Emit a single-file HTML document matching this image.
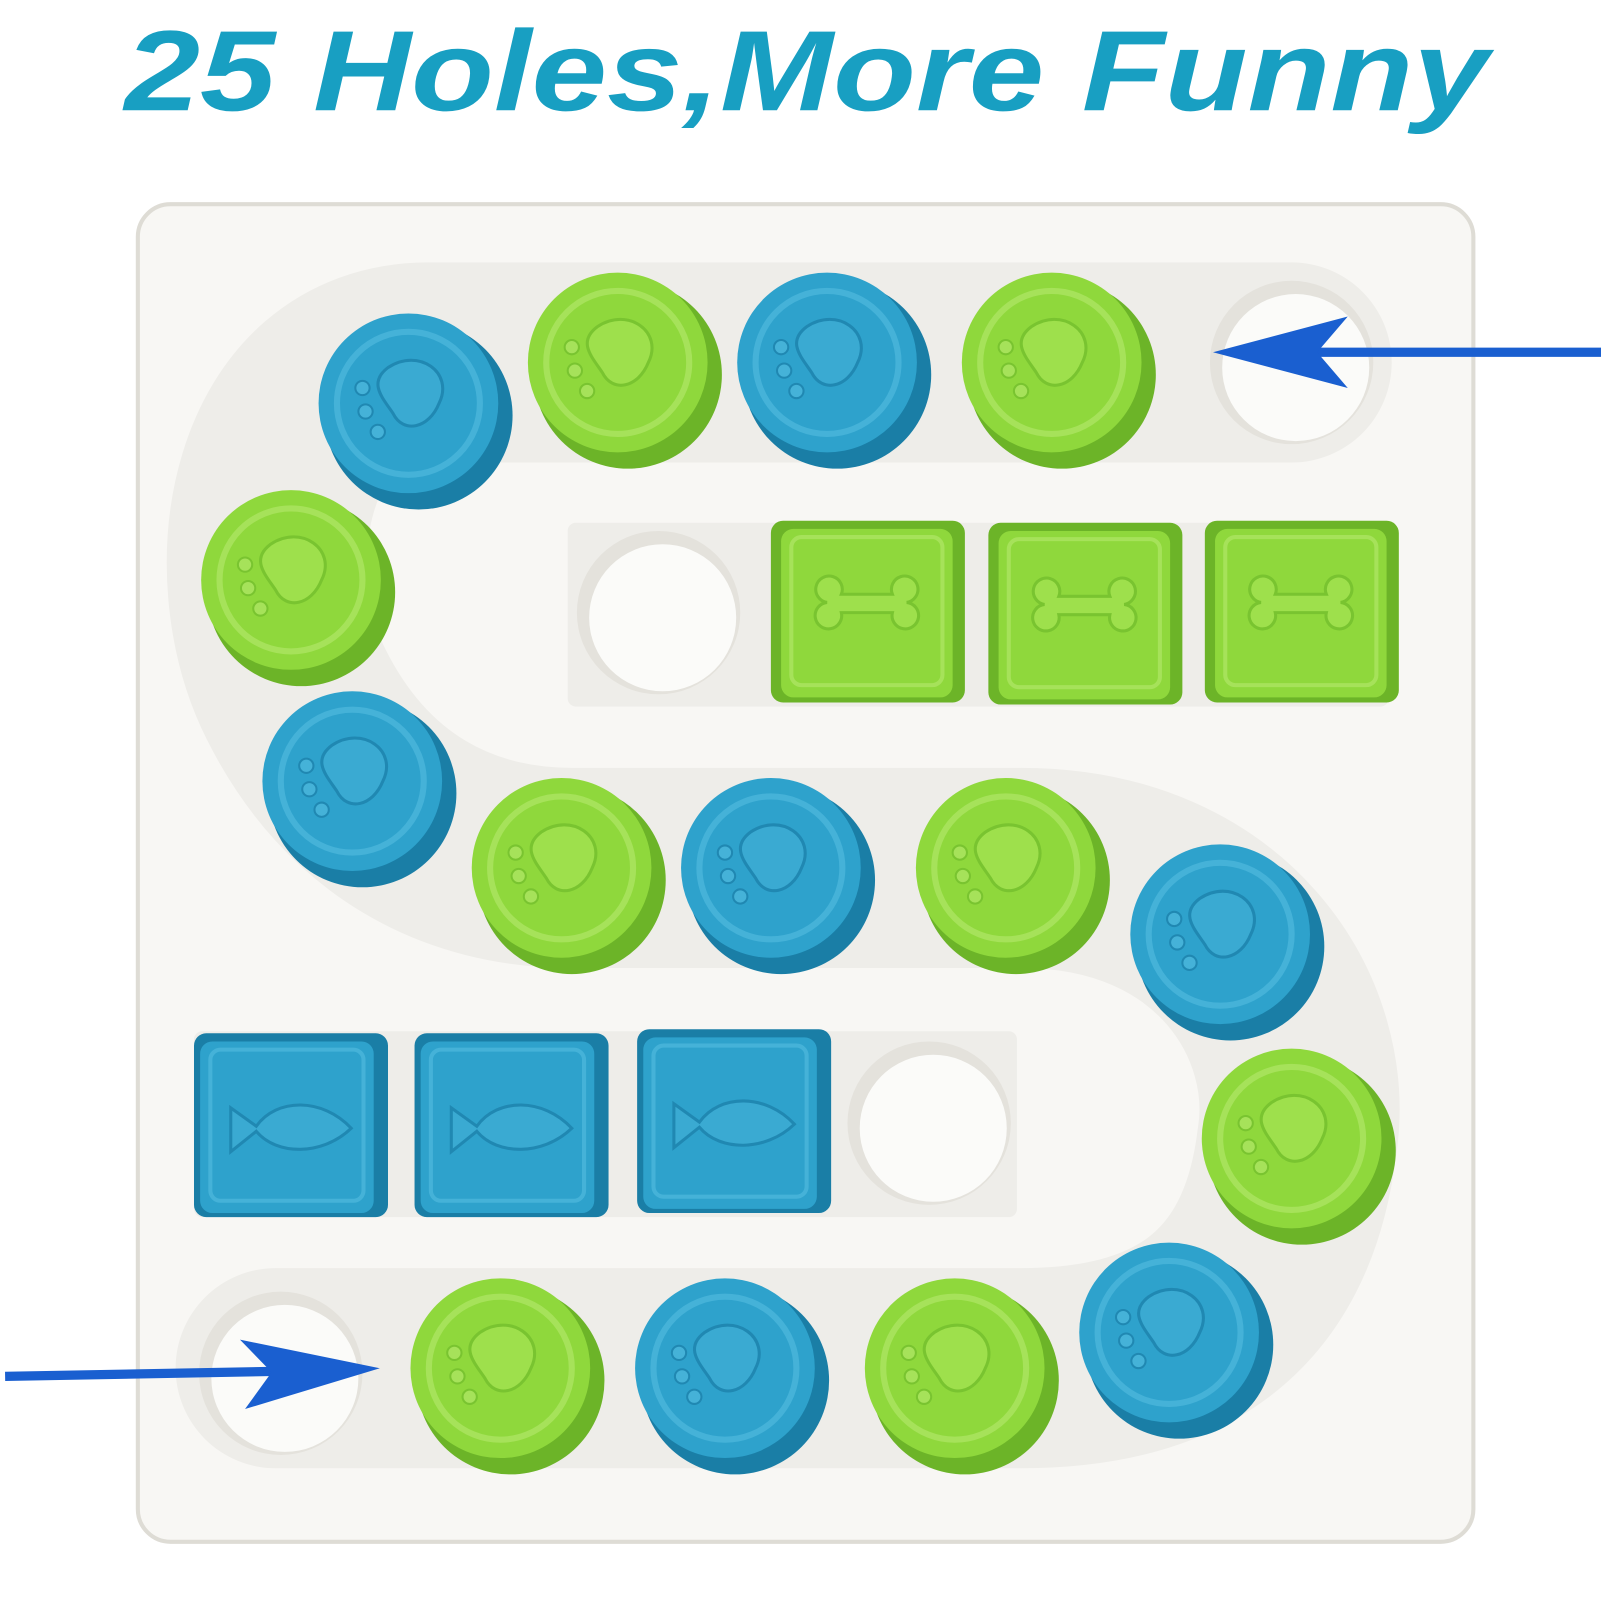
<!DOCTYPE html>
<html><head><meta charset="utf-8"><style>
html,body{margin:0;padding:0;background:#fff;}
svg{display:block}
</style></head><body>
<svg width="1601" height="1601" viewBox="0 0 1568 1568" xmlns="http://www.w3.org/2000/svg">
<defs>
<g id="gc">
  <circle cx="10" cy="12" r="92" fill="#6cb428"/>
  <circle cx="0" cy="0" r="88" fill="#8fd83c"/>
  <circle cx="0" cy="0" r="70" fill="none" stroke="#a6e25a" stroke-width="6"/>
  <path d="M-20,-35 C10,-55 45,-30 30,0 C20,25 -5,30 -15,10 C-25,-5 -40,-20 -20,-35Z" fill="#9ee04c" stroke="#79c430" stroke-width="3"/>
  <circle cx="-45" cy="-15" r="7" fill="#a6e25a" stroke="#79c430" stroke-width="2"/>
  <circle cx="-42" cy="8" r="7" fill="#a6e25a" stroke="#79c430" stroke-width="2"/>
  <circle cx="-30" cy="28" r="7" fill="#a6e25a" stroke="#79c430" stroke-width="2"/>
</g>
<g id="bc">
  <circle cx="10" cy="12" r="92" fill="#1a7ea6"/>
  <circle cx="0" cy="0" r="88" fill="#2ea2cc"/>
  <circle cx="0" cy="0" r="70" fill="none" stroke="#45b2d8" stroke-width="6"/>
  <path d="M-20,-35 C10,-55 45,-30 30,0 C20,25 -5,30 -15,10 C-25,-5 -40,-20 -20,-35Z" fill="#3aaad2" stroke="#2088b2" stroke-width="3"/>
  <circle cx="-45" cy="-15" r="7" fill="#45b2d8" stroke="#2088b2" stroke-width="2"/>
  <circle cx="-42" cy="8" r="7" fill="#45b2d8" stroke="#2088b2" stroke-width="2"/>
  <circle cx="-30" cy="28" r="7" fill="#45b2d8" stroke="#2088b2" stroke-width="2"/>
</g>
<g id="gs">
  <rect x="-10" y="-8" width="190" height="178" rx="12" fill="#6cb428"/>
  <rect x="0" y="0" width="168" height="165" rx="12" fill="#8fd83c"/>
  <rect x="10" y="8" width="148" height="145" rx="10" fill="none" stroke="#a6e25a" stroke-width="4"/>
  <path d="M45,72 a13,13 0 1 1 14,-8 h50 a13,13 0 1 1 14,8 a13,13 0 1 1 -14,10 h-50 a13,13 0 1 1 -14,-10z" fill="#9ee04c" stroke="#79c430" stroke-width="3"/>
</g>
<g id="bs">
  <rect x="-6" y="-8" width="190" height="180" rx="12" fill="#1a7ea6"/>
  <rect x="0" y="0" width="170" height="168" rx="12" fill="#2ea2cc"/>
  <rect x="10" y="8" width="150" height="148" rx="10" fill="none" stroke="#45b2d8" stroke-width="4"/>
  <path d="M30,65 l25,18 C75,55 120,55 148,85 C120,112 75,112 55,88 l-25,20z" fill="#3aaad2" stroke="#2088b2" stroke-width="3"/>
</g>
<g id="hole">
  <circle r="80" fill="#e4e2dc"/>
  <circle r="72" fill="#fbfbf9" cx="4" cy="5"/>
</g>
</defs>
<text x="790" y="108" text-anchor="middle" font-family="Liberation Sans, sans-serif" font-weight="bold" font-style="italic" font-size="112" fill="#189fc2" textLength="1336" lengthAdjust="spacingAndGlyphs">25 Holes,More Funny</text>

<rect x="135" y="200" width="1308" height="1310" rx="32" fill="#f8f7f4" stroke="#dedcd5" stroke-width="4"/>
<path d="M1265,355 L420,355 C260,355 230,560 290,680 C350,800 450,850 560,850 L1000,850 C1200,850 1290,1000 1270,1120 C1250,1280 1150,1340 1000,1340 L270,1340" stroke="#eeede9" stroke-width="196" fill="none" stroke-linecap="round"/>
<rect x="556" y="512" width="804" height="180" rx="8" fill="#eeede9"/>
<rect x="190" y="1010" width="806" height="182" rx="8" fill="#eeede9"/>

<use href="#hole" x="1265" y="355"/>
<use href="#hole" x="645" y="600"/>
<use href="#hole" x="910" y="1100"/>
<use href="#hole" x="275" y="1345"/>

<use href="#bc" x="400" y="395"/>
<use href="#gc" x="605" y="355"/>
<use href="#bc" x="810" y="355"/>
<use href="#gc" x="1030" y="355"/>
<use href="#gc" x="285" y="568"/>
<use href="#bc" x="345" y="765"/>
<use href="#gc" x="550" y="850"/>
<use href="#bc" x="755" y="850"/>
<use href="#gc" x="985" y="850"/>
<use href="#bc" x="1195" y="915"/>
<use href="#gc" x="1265" y="1115"/>
<use href="#bc" x="1145" y="1305"/>
<use href="#gc" x="935" y="1340"/>
<use href="#bc" x="710" y="1340"/>
<use href="#gc" x="490" y="1340"/>

<use href="#gs" x="765" y="518"/>
<use href="#gs" x="978" y="520"/>
<use href="#gs" x="1190" y="518"/>
<use href="#bs" x="196" y="1020"/>
<use href="#bs" x="412" y="1020"/>
<use href="#bs" x="630" y="1016"/>

<line x1="1568" y1="345" x2="1230" y2="345" stroke="#1a5fd0" stroke-width="9"/>
<polygon points="1188,345 1320,310 1290,345 1320,380" fill="#1a5fd0"/>
<line x1="5" y1="1348" x2="330" y2="1342" stroke="#1a5fd0" stroke-width="9"/>
<polygon points="372,1340 235,1312 266,1344 240,1380" fill="#1a5fd0"/>
</svg>
</body></html>
